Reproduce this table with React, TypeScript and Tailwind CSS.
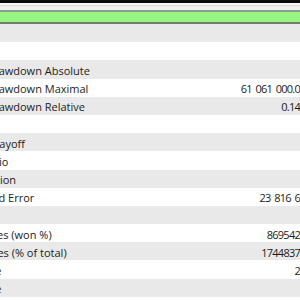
const rows: { label: string; value: string }[] = [
  { label: "", value: "" },
  { label: "", value: "" },
  { label: "Balance Drawdown Absolute", value: "" },
  { label: "Balance Drawdown Maximal", value: "61 061 000.0" },
  { label: "Balance Drawdown Relative", value: "0.14" },
  { label: "", value: "" },
  { label: "Expected Payoff", value: "" },
  { label: "Sharpe Ratio", value: "" },
  { label: "LR Correlation", value: "" },
  { label: "LR Standard Error", value: "23 816 6" },
  { label: "", value: "" },
  { label: "Short Trades (won %)", value: "869542" },
  { label: "Profit Trades (% of total)", value: "1744837" },
  { label: "profit trade", value: "2" },
  { label: "profit trade", value: "" },
  { label: "", value: "" },
]

export default function App() {
  return (
    <div
      className="w-[300px] h-[300px] overflow-hidden bg-white text-[#1c1c1c]"
      style={{ fontFamily: '"Open Sans", "Noto Sans", sans-serif' }}
    >
      <div className="h-[3px] bg-[#0b0b0b]" />
      <div className="h-[2px] bg-[#f8f8f8]" />
      <div className="h-[1px] bg-[#dadada]" />
      <div className="h-[4px] bg-[#f0f0f0]" />
      <div className="h-[14px] bg-[#98f582] border-t-2 border-b-2 border-t-[#8e9e8c] border-b-[#6e7e6c]" />
      <div className="flex flex-col">
        {rows.map((r, i) => (
          <div
            key={i}
            className={`flex items-center justify-between h-[18.2px] text-[11px] leading-none ${
              i % 2 === 0 ? "bg-[#e9e9e9]" : "bg-white"
            }`}
          >
            <span className="ml-[-57px] pt-[2px] whitespace-nowrap">{r.label}</span>
            <span className="pt-[2px] tracking-[-0.75px] [word-spacing:1.5px] whitespace-nowrap">{r.value}</span>
          </div>
        ))}
      </div>
    </div>
  )
}
